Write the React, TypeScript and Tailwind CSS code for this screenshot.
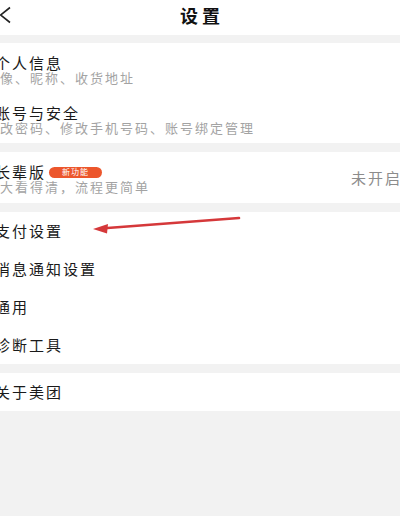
import type { ReactNode } from "react"

const font = { fontFamily: '"Noto Sans CJK SC", "Noto Sans", sans-serif' }

function TwoLineRow({ title, sub, badge, right }: { title: string; sub: string; badge?: string; right?: string }) {
  return (
    <div className="flex items-center justify-between pt-[11px] pb-[9px]">
      <div className="flex flex-col -ml-[5px]">
        <div className="flex items-center">
          <span className="text-[15px] leading-[18px] tracking-[2px] text-[#1a1a1a]">{title}</span>
          {badge && (
            <span className="ml-[3px] flex h-[11px] w-[53px] items-center justify-center rounded-full bg-[#ec562c] text-[8px] leading-none tracking-[1px] text-white">
              {badge}
            </span>
          )}
        </div>
        <span className="-ml-[10px] text-[13px] leading-[12px] tracking-[2px] text-[#a3a3a3]">{sub}</span>
      </div>
      {right && <span className="-mr-[2px] text-[15px] tracking-[2px] text-[#8c8c8c]">{right}</span>}
    </div>
  )
}

function Row({ children }: { children: ReactNode }) {
  return (
    <div className="flex h-[38px] items-center">
      <span className="-ml-[5px] text-[15px] leading-[18px] tracking-[2px] text-[#1a1a1a]">{children}</span>
    </div>
  )
}

export default function App() {
  return (
    <div className="relative h-[516px] w-[400px] overflow-hidden bg-[#f2f2f2]" style={font}>
      {/* header */}
      <div className="grid h-[35px] grid-cols-[1fr_auto_1fr] items-center bg-white pb-[5px]">
        <svg width="14" height="18" viewBox="0 0 14 18" className="-ml-[2px]">
          <path d="M12 1.5 L2.5 9 L12 16.5" fill="none" stroke="#222" strokeWidth="1.6" strokeLinejoin="miter" />
        </svg>
        <span className="pl-[4px] text-[18px] font-bold tracking-[4px] text-[#111]">设置</span>
        <span />
      </div>

      <div className="mt-[8px] bg-white">
        <TwoLineRow title="个人信息" sub="头像、昵称、收货地址" />
        <TwoLineRow title="账号与安全" sub="修改密码、修改手机号码、账号绑定管理" />
      </div>

      <div className="mt-[9px] bg-white">
        <div className="pb-[1px]">
          <TwoLineRow title="长辈版" badge="新功能" sub="字大看得清，流程更简单" right="未开启" />
        </div>
      </div>

      <div className="mt-[9px] bg-white">
        <Row>支付设置</Row>
        <Row>消息通知设置</Row>
        <Row>通用</Row>
        <Row>诊断工具</Row>
      </div>

      <div className="mt-[9px] bg-white">
        <Row>关于美团</Row>
      </div>

      {/* annotation arrow drawn over the screenshot */}
      <svg className="pointer-events-none absolute inset-0" width="400" height="516" viewBox="0 0 400 516">
        <line x1="239" y1="218" x2="104" y2="228.3" stroke="#d5383a" strokeWidth="2.6" strokeLinecap="round" />
        <polygon points="93,229 108,224 107,233.5" fill="#d5383a" />
      </svg>
    </div>
  )
}
